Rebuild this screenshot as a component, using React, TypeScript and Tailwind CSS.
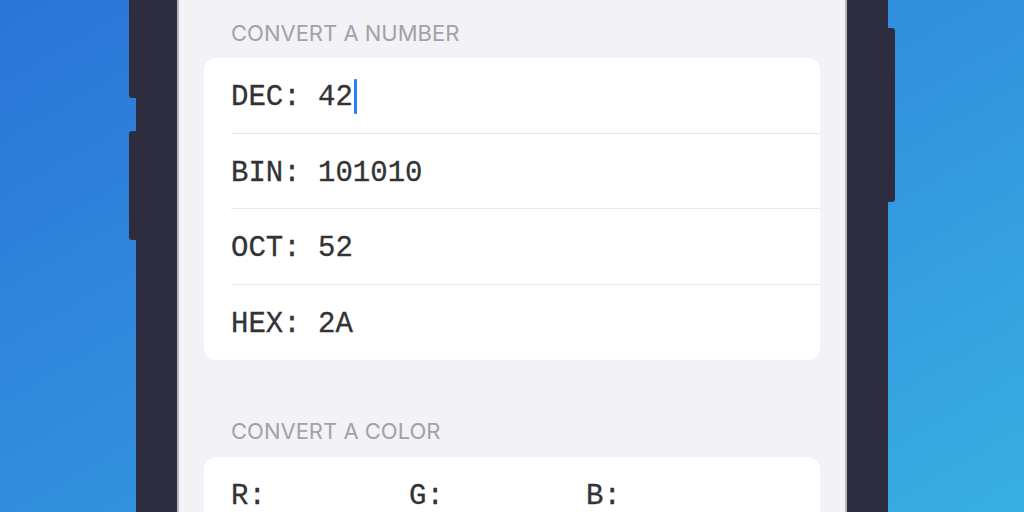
import React from "react";

const mono = "font-['Liberation_Mono',_'DejaVu_Sans_Mono',_monospace] [-webkit-text-stroke:0.3px_#333335]";

function Row({ label, value, cursor, last }: { label: string; value: string; cursor?: boolean; last?: boolean }) {
  return (
    <div className={`ml-[27px] h-[75.5px] flex items-center ${last ? "" : "border-b border-[#e6e6eb]"}`}>
      <span className={`${mono} pt-[5px] text-[29px] text-[#333335] whitespace-pre`}>{label}: {value}</span>
      {cursor && <span className="ml-[1px] mt-[2px] w-[3px] h-[35px] rounded-[1px] bg-[#2f7df6]" />}
    </div>
  );
}

export default function App() {
  return (
    <div className="w-[1024px] h-[512px] overflow-hidden bg-[linear-gradient(150deg,#2a74d8_0%,#3290dd_50%,#38afe1_100%)] flex pl-[136px]">
      <div className="relative w-[752px] h-full bg-[#2e2d40] px-[41px]">
        <div className="absolute left-[-7px] top-0 w-[8px] h-[98px] bg-[#2e2d40] rounded-bl-[3px]" />
        <div className="absolute left-[-7px] top-[131px] w-[8px] h-[109px] bg-[#2e2d40] rounded-l-[3px]" />
        <div className="absolute right-[-7px] top-[28px] w-[8px] h-[174px] bg-[#2e2d40] rounded-r-[3px]" />
        <div className="h-full bg-[#f2f2f7] border-x-2 border-[#b8b8c2] px-[25px] flex flex-col">
          <div className="pt-[20px] pb-[12px] pl-[27px] leading-[26px] text-[22px] text-[#a2a2a7] font-['Inter',_sans-serif] uppercase">
            Convert a Number
          </div>
          <div className="bg-white rounded-[12px]">
            <Row label="DEC" value="42" cursor />
            <Row label="BIN" value="101010" />
            <Row label="OCT" value="52" />
            <Row label="HEX" value="2A" last />
          </div>
          <div className="pt-[58px] pb-[13px] pl-[27px] leading-[26px] text-[22px] text-[#a2a2a7] font-['Inter',_sans-serif] uppercase">
            Convert a Color
          </div>
          <div className="bg-white rounded-[12px]">
            <div className="ml-[27px] h-[75px] flex items-center">
              <span className={`${mono} pt-[5px] w-[178px] text-[29px] text-[#333335]`}>R:</span>
              <span className={`${mono} pt-[5px] w-[177px] text-[29px] text-[#333335]`}>G:</span>
              <span className={`${mono} pt-[5px] w-[177px] text-[29px] text-[#333335]`}>B:</span>
            </div>
          </div>
        </div>
      </div>
    </div>
  );
}
